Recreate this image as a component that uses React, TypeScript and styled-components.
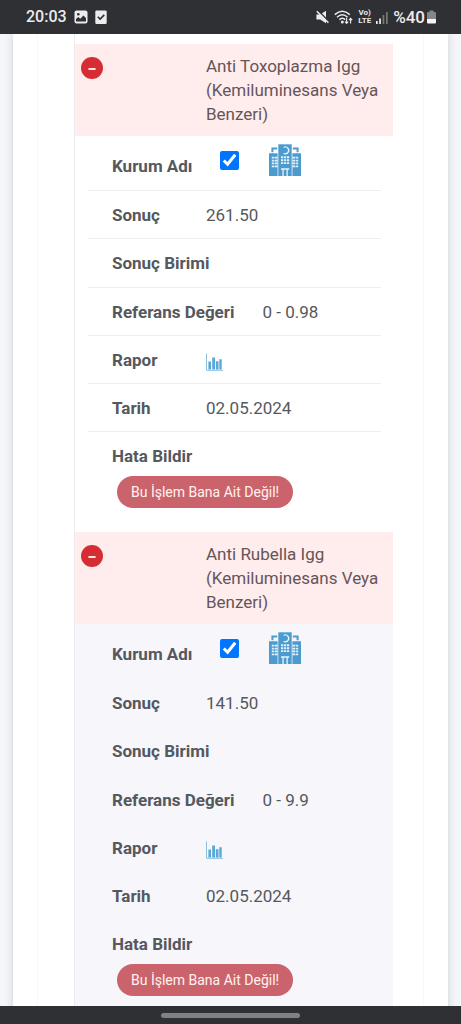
import React from 'react';
import styled, { createGlobalStyle } from 'styled-components';

const GlobalStyle = createGlobalStyle`
  *, *::before, *::after { box-sizing: border-box; }
  body {
    margin: 0;
    font-family: Roboto, "Liberation Sans", sans-serif;
    font-size: 17px;
    line-height: 24px;
    color: #55585d;
    background: #f4f6f9;
  }
`;

const Screen = styled.div`
  display: flex;
  flex-direction: column;
  height: 100vh;
`;

const StatusBar = styled.header`
  flex: none;
  display: flex;
  align-items: center;
  justify-content: space-between;
  height: 34px;
  padding: 0 25px 0 26px;
  background: #2f3033;
  color: #ececee;
  font-weight: 500;
`;

const StatusGroup = styled.div<{ $gap: number }>`
  display: flex;
  align-items: center;
  gap: ${(p) => p.$gap}px;
`;

const Clock = styled.span`
  font-size: 16px;
`;

const NetworkLabel = styled.span`
  font-size: 8px;
  line-height: 8px;
  font-weight: 700;
  text-align: center;
`;

const Battery = styled.span`
  display: flex;
  align-items: center;
  gap: 2px;
`;

const Content = styled.main`
  flex: 1;
  min-height: 0;
  overflow-y: auto;
  scrollbar-width: none;
  padding: 0 13px;
`;

const Sheet = styled.div`
  padding: 0 24px;
  background: #fff;
  box-shadow: 0 0 8px rgba(60, 70, 90, 0.22);
`;

const Panel = styled.section`
  padding: 0 30px 0 36px;
  border: 1px solid #f8f8f9;
  border-width: 0 1px;
`;

const ResultsTable = styled.table`
  width: 100%;
  border-collapse: separate;
  border-spacing: 0;
  border-left: 1px solid #ececef;

  td { padding: 0; vertical-align: top; }
`;

const SpacerCell = styled.td`
  height: 10px;
`;

const HeadRow = styled.tr`
  background: #ffeced;
  color: #655558;
`;

const ToggleCell = styled.td`
  width: 131px;
`;

const ToggleButton = styled.button`
  display: flex;
  align-items: center;
  justify-content: center;
  width: 22px;
  height: 22px;
  margin: 13px 0 0 6px;
  padding: 0;
  border: 0;
  border-radius: 50%;
  background: #d52d33;
`;

const NameText = styled.div`
  padding: 10px 12px 10px 0;
`;

const Details = styled.dl<{ $shaded: boolean }>`
  margin: 0;
  padding: 0 12px 0 13px;
  background: ${(p) => (p.$shaded ? '#f6f6fb' : '#fff')};
  --rule: ${(p) => (p.$shaded ? '#f4f4f9' : '#efeff0')};
`;

const Row = styled.div<{ $height?: number }>`
  display: flex;
  align-items: center;
  height: ${(p) => p.$height ?? 48}px;
  padding-left: 24px;
  border-bottom: 1px solid var(--rule);
`;

const Label = styled.dt`
  min-width: 94px;
  padding-right: 28px;
  font-weight: 700;
  white-space: nowrap;
`;

const Value = styled.dd`
  display: flex;
  align-items: center;
  margin: 0;
`;

const InstitutionRow = styled(Row)`
  align-items: flex-start;
  padding-top: 8px;

  ${Label} { padding-top: 10px; }
  ${Value} { gap: 30px; }
`;

const Check = styled.input`
  width: 19px;
  height: 19px;
  margin: 0;
  accent-color: #0075ff;
`;

const ReportLink = styled.a`
  display: flex;
  padding-top: 4px;
`;

const ReportRow = styled.div`
  padding: 12px 24px 24px;
`;

const ReportValue = styled.dd`
  margin: 8px 0 0 5px;
`;

const DisputeButton = styled.button`
  display: block;
  height: 32px;
  padding: 0 14px;
  border: 0;
  border-radius: 16px;
  background: #cb636d;
  color: #fff3ee;
  font-family: inherit;
  font-size: 14px;
  line-height: 20px;
  white-space: nowrap;
`;

const NavBar = styled.footer`
  flex: none;
  display: flex;
  align-items: center;
  justify-content: center;
  height: 18px;
  background: #2f3033;
`;

const NavHandle = styled.span`
  width: 30%;
  height: 5px;
  border-radius: 3px;
  background: #808184;
`;

const ImageIcon = () => (
  <svg width="14" height="14" viewBox="0 0 14 14" aria-hidden="true">
    <rect x="0.5" y="0.5" width="13" height="13" rx="2" fill="#ececee" />
    <circle cx="4.3" cy="4.3" r="1.3" fill="#2f3033" />
    <path d="M2 11.5V9l2.3-2 2 1.7L9.4 5.5 12 8v3.5z" fill="#2f3033" />
  </svg>
);

const TaskIcon = () => (
  <svg width="12" height="14" viewBox="0 0 12 14" aria-hidden="true">
    <rect x="0.3" y="0.5" width="11.4" height="13.5" rx="1.2" fill="#ececee" />
    <path d="M2.8 6.8l2.3 2.3 4.2-4.2" fill="none" stroke="#2f3033" strokeWidth="1.6" />
  </svg>
);

const MuteIcon = () => (
  <svg width="13" height="14" viewBox="0 0 13 14" aria-hidden="true">
    <path d="M0.4 4.6h3.8L10 0.8v12.4L4.2 9.6H0.4z" fill="#ececee" />
    <path d="M1.8 0.2L13 11.4" stroke="#2f3033" strokeWidth="1.4" />
    <path d="M0.8 1.2L12.4 12.8" stroke="#ececee" strokeWidth="1.5" />
  </svg>
);

const WifiIcon = () => (
  <svg width="19" height="15" viewBox="0 0 19 15" aria-hidden="true">
    <g fill="none" stroke="#ececee" strokeWidth="1.5">
      <path d="M0.8 4.6Q8.2-2.2 15.8 4.6" />
      <path d="M3 7.2Q8.3 2.4 13.6 7.2" />
      <path d="M5.4 9.6Q8.3 7 11.2 9.6" />
    </g>
    <circle cx="8.3" cy="12" r="1.5" fill="#ececee" />
    <path d="M12.6 8v5M11 11.6l1.6 1.8 1.6-1.8M16.6 13.5v-5M15 10.2l1.6-1.8 1.6 1.8" fill="none" stroke="#ececee" strokeWidth="1.1" />
  </svg>
);

const SignalIcon = () => (
  <svg width="12" height="13" viewBox="0 0 12 13" aria-hidden="true">
    <path d="M0 10h1.7v3H0zM3.2 7.5h1.7V13H3.2z" fill="#ececee" />
    <path d="M6.6 4h1.7v9H6.6zM10 1h1.7v12H10z" fill="#77787b" />
  </svg>
);

const BatteryIcon = () => (
  <svg width="9" height="14" viewBox="0 0 9 14" aria-hidden="true">
    <path d="M2.5 0.5h4V2H8a1 1 0 0 1 1 1v6H0V3a1 1 0 0 1 1-1h1.5z" fill="#85868a" />
    <path d="M0 9h9v3.5a1 1 0 0 1-1 1H1a1 1 0 0 1-1-1z" fill="#f4f4f5" />
  </svg>
);

const MinusIcon = () => (
  <svg width="8" height="8" viewBox="0 0 8 8" aria-hidden="true">
    <rect x="0.4" y="4" width="7.2" height="2" rx="0.4" fill="#ffe3dc" />
  </svg>
);

const HospitalIcon = () => (
  <svg width="32" height="32" viewBox="0 0 32 32" role="img" aria-label="Hastane">
    <g fill="#4c9bcf">
      <path d="M9.3 0.3h13.4V32H9.3z" />
      <path d="M0 9.3h8.6V32H0zM23.4 9.3H32V32h-8.6z" />
      <path d="M2.4 3.6h5.8v2H4.4v2.6h-2zM29.6 3.6h-5.8v2h3.8v2.6h2z" />
    </g>
    <path d="M14.2 2.9a4 4 0 1 1 0 6.8 1.4 1.4 0 0 1 .6-.8 2.9 2.9 0 1 0 0-5.2z" fill="#eff8fd" />
    <g fill="#e6f3fb">
      <path d="M12 12.2h2.2v2.1H12zM15 12.2h2.2v2.1H15zM18 12.2h2.2v2.1H18zM12 15.2h2.2v2.1H12zM15 15.2h2.2v2.1H15zM18 15.2h2.2v2.1H18zM12 18.2h2.2v1.8H12zM15 18.2h2.2v1.8H15zM18 18.2h2.2v1.8H18z" />
      <path d="M2.8 12.8h5.8v1.7H2.8zM2.8 15.7h5.8v1.7H2.8zM2.8 18.6h5.8v1.7H2.8zM2.8 21.5h5.8v1.7H2.8zM23.4 12.8h5.8v1.7h-5.8zM23.4 15.7h5.8v1.7h-5.8zM23.4 18.6h5.8v1.7h-5.8zM23.4 21.5h5.8v1.7h-5.8z" />
      <path d="M12 24.2h8.2v1.5h-1.4V32h-1.3v-6.2h-2.8V32h-1.3v-6.3H12z" />
    </g>
    <path d="M5.4 12.4v11M26.6 12.4v11" stroke="#4c9bcf" strokeWidth="0.7" />
  </svg>
);

const ChartIcon = () => (
  <svg width="18" height="18" viewBox="0 0 18 18" aria-hidden="true">
    <path d="M0.5 0.5v16.8H17" fill="none" stroke="#8fbfdd" strokeWidth="1" />
    <path d="M2.4 8.5h2.6v8H2.4zM6.2 4.5h2.8v12H6.2zM9.9 8.2h2.6v8.3H9.9zM13.3 6.3h2.4v10.2h-2.4z" fill="#58a8d8" />
  </svg>
);

type Result = {
  id: string;
  name: string;
  value: string;
  unit: string;
  reference: string;
  date: string;
};

const results: Result[] = [
  {
    id: 'toxoplazma',
    name: 'Anti Toxoplazma Igg (Kemiluminesans Veya Benzeri)',
    value: '261.50',
    unit: '',
    reference: '0 - 0.98',
    date: '02.05.2024',
  },
  {
    id: 'rubella',
    name: 'Anti Rubella Igg (Kemiluminesans Veya Benzeri)',
    value: '141.50',
    unit: '',
    reference: '0 - 9.9',
    date: '02.05.2024',
  },
];

const ResultRows = ({ result, shaded }: { result: Result; shaded: boolean }) => (
  <>
    <HeadRow>
      <ToggleCell>
        <ToggleButton type="button" aria-label="Daralt" aria-expanded="true">
          <MinusIcon />
        </ToggleButton>
      </ToggleCell>
      <td>
        <NameText>{result.name}</NameText>
      </td>
    </HeadRow>
    <tr>
      <td colSpan={2}>
        <Details $shaded={shaded}>
          <InstitutionRow $height={55}>
            <Label>
              <label htmlFor={result.id}>Kurum Adı</label>
            </Label>
            <Value>
              <Check id={result.id} type="checkbox" defaultChecked />
              <HospitalIcon />
            </Value>
          </InstitutionRow>
          <Row>
            <Label>Sonuç</Label>
            <Value>{result.value}</Value>
          </Row>
          <Row $height={49}>
            <Label>Sonuç Birimi</Label>
            <Value>{result.unit}</Value>
          </Row>
          <Row>
            <Label>Referans Değeri</Label>
            <Value>{result.reference}</Value>
          </Row>
          <Row>
            <Label>Rapor</Label>
            <Value>
              <ReportLink href="#rapor" aria-label="Rapor">
                <ChartIcon />
              </ReportLink>
            </Value>
          </Row>
          <Row>
            <Label>Tarih</Label>
            <Value>{result.date}</Value>
          </Row>
          <ReportRow>
            <Label>Hata Bildir</Label>
            <ReportValue>
              <DisputeButton type="button">Bu İşlem Bana Ait Değil!</DisputeButton>
            </ReportValue>
          </ReportRow>
        </Details>
      </td>
    </tr>
  </>
);

export default function App() {
  return (
    <>
      <GlobalStyle />
      <Screen>
        <StatusBar>
          <StatusGroup $gap={7}>
            <Clock>20:03</Clock>
            <ImageIcon />
            <TaskIcon />
          </StatusGroup>
          <StatusGroup $gap={5}>
            <MuteIcon />
            <WifiIcon />
            <NetworkLabel>
              Vo)
              <br />
              LTE
            </NetworkLabel>
            <SignalIcon />
            <Battery>
              <span>%40</span>
              <BatteryIcon />
            </Battery>
          </StatusGroup>
        </StatusBar>
        <Content>
          <Sheet>
            <Panel>
              <ResultsTable>
                <tbody>
                  <tr>
                    <SpacerCell colSpan={2} />
                  </tr>
                  {results.map((result, index) => (
                    <ResultRows key={result.id} result={result} shaded={index % 2 === 1} />
                  ))}
                </tbody>
              </ResultsTable>
            </Panel>
          </Sheet>
        </Content>
        <NavBar>
          <NavHandle />
        </NavBar>
      </Screen>
    </>
  );
}
